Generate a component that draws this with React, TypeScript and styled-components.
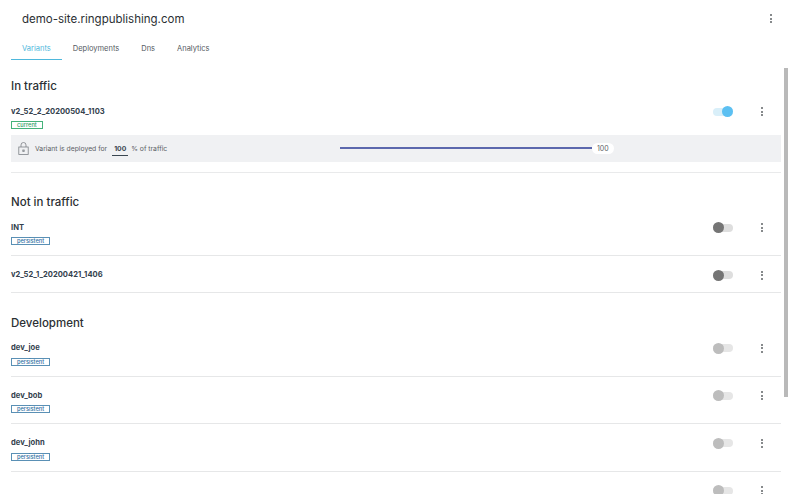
import styled, { createGlobalStyle } from "styled-components";

const GlobalStyle = createGlobalStyle`
  html, body {
    margin: 0;
    background: #fff;
    font-family: Inter, "Liberation Sans", sans-serif;
    overflow: hidden;
  }
`;

const Page = styled.div`
  width: 800px;
  height: 494px;
  display: flex;
  flex-direction: column;
  overflow: hidden;
`;

const Header = styled.header`
  height: 37px;
  flex: none;
  display: flex;
  align-items: center;
  justify-content: space-between;
  padding: 0 28px 0 22px;
`;

const Title = styled.h1`
  margin: 0;
  font-size: 11.5px;
  font-weight: 400;
  color: #2b2f33;
`;

const Tabs = styled.nav`
  height: 22px;
  flex: none;
  display: flex;
  padding-left: 11px;
`;

const Tab = styled.a<{ $active?: boolean }>`
  box-sizing: border-box;
  height: 23px;
  padding: 1px 11px 0;
  font-size: 7.5px;
  line-height: 22px;
  color: ${(p) => (p.$active ? "#4fb8dc" : "#555a5f")};
  border-bottom: 1px solid ${(p) => (p.$active ? "#4fb8dc" : "transparent")};
`;

const ScrollArea = styled.main`
  position: relative;
  flex: 1;
  overflow: hidden;
  padding: 17px 19px 0 11px;
`;

const Thumb = styled.div`
  position: absolute;
  top: 9px;
  right: 12.5px;
  width: 3.5px;
  height: 329px;
  background: #b9b9b9;
`;

const Section = styled.section`
  margin-bottom: 19.5px;
`;

const SectionTitle = styled.h2`
  margin: 0;
  height: 16.5px;
  font-size: 11.5px;
  line-height: 21px;
  font-weight: 500;
  color: #2b2f33;
`;

const Row = styled.div<{ $plain?: boolean; $height: number }>`
  box-sizing: border-box;
  display: flex;
  justify-content: space-between;
  align-items: flex-start;
  padding-top: 13px;
  height: ${(p) => p.$height}px;
  border-bottom: 1px solid ${(p) => (p.$plain ? "transparent" : "#e6e7e8")};
`;

const RowInfo = styled.div`
  display: flex;
  flex-direction: column;
  align-items: flex-start;
  gap: 3.8px;
`;

const VariantName = styled.span`
  font-size: 7.6px;
  line-height: 12px;
  font-weight: 700;
  color: #33414d;
`;

const Badge = styled.span<{ $color: string; $border: string }>`
  box-sizing: border-box;
  height: 8px;
  padding: 0 5px;
  font-size: 5.7px;
  font-weight: 500;
  line-height: 6px;
  color: ${(p) => p.$color};
  border: 1px solid ${(p) => p.$border};
`;

const RowActions = styled.div`
  height: 12px;
  display: flex;
  align-items: center;
  gap: 28px;
  margin-right: 18px;
`;

const Switch = styled.div<{ $on?: boolean; $tone: string; $track: string }>`
  position: relative;
  width: 20px;
  height: 8px;
  border-radius: 4px;
  background: ${(p) => p.$track};

  &::after {
    content: "";
    position: absolute;
    top: -1.5px;
    left: ${(p) => (p.$on ? "9px" : "0")};
    width: 11px;
    height: 11px;
    border-radius: 50%;
    background: ${(p) => p.$tone};
  }
`;

const Kebab = styled.span`
  display: flex;
  flex-direction: column;
  gap: 1.5px;
  width: 2px;

  i {
    display: block;
    width: 2px;
    height: 2px;
    border-radius: 50%;
    background: #5f6366;
  }
`;

const TrafficBar = styled.div`
  height: 27.2px;
  display: flex;
  align-items: center;
  background: #f0f1f3;
  padding-left: 7px;
  font-size: 6.8px;
  color: #5c6166;
`;

const TrafficText = styled.div`
  width: 305px;
  display: flex;
  align-items: center;
  margin-left: 6px;
`;

const TrafficValue = styled.span`
  margin: 0 3px 0 5px;
  padding: 3px 2px 2px;
  font-weight: 700;
  color: #3a4650;
  border-bottom: 1px solid #3a4650;
`;

const Slider = styled.div`
  width: 252px;
  height: 2px;
  background: #5c68ad;
`;

const SliderValue = styled.span`
  padding: 1px 5px;
  font-size: 7px;
  color: #5c6166;
  background: #fff;
  border-radius: 7px;
`;

const TrafficRule = styled.div`
  margin-top: 10px;
  height: 1px;
  background: #e9eaeb;
`;

const Dots = () => (
  <Kebab>
    <i />
    <i />
    <i />
  </Kebab>
);

const Lock = () => (
  <svg width="11" height="13" viewBox="0 0 11 13" fill="none" stroke="#7d8287" strokeWidth="0.8">
    <rect x="0.8" y="5" width="9.4" height="7.4" />
    <path d="M3 5V3a2.5 2.5 0 0 1 5 0v2" />
    <rect x="4.8" y="8" width="1.4" height="1.4" />
  </svg>
);

type Variant = { name?: string; badge?: string; kind: "live" | "idle" | "dev"; height?: number };

const switchTones = {
  live: { $tone: "#5cc0f2", $track: "#d9eff9" },
  idle: { $tone: "#757575", $track: "#dedede" },
  dev: { $tone: "#bdbdbd", $track: "#e6e6e6" },
};

const VariantRow = ({ name, badge, kind, plain, height = 47.5 }: Variant & { plain?: boolean }) => (
  <Row $plain={plain} $height={height}>
    <RowInfo>
      <VariantName>{name}</VariantName>
      {badge === "current" && (
        <Badge $color="#2f9c62" $border="#45b27a">
          current
        </Badge>
      )}
      {badge === "persistent" && (
        <Badge $color="#2f6f9f" $border="#5a90b5">
          persistent
        </Badge>
      )}
    </RowInfo>
    <RowActions>
      <Switch $on={kind === "live"} {...switchTones[kind]} />
      <Dots />
    </RowActions>
  </Row>
);

export default function App() {
  return (
    <Page>
      <GlobalStyle />
      <Header>
        <Title>demo-site.ringpublishing.com</Title>
        <Dots />
      </Header>
      <Tabs>
        <Tab $active>Variants</Tab>
        <Tab>Deployments</Tab>
        <Tab>Dns</Tab>
        <Tab>Analytics</Tab>
      </Tabs>
      <ScrollArea>
        <Thumb />
        <Section>
          <SectionTitle>In traffic</SectionTitle>
          <VariantRow name="v2_52_2_20200504_1103" badge="current" kind="live" plain height={42} />
          <TrafficBar>
            <Lock />
            <TrafficText>
              Variant is deployed for <TrafficValue>100</TrafficValue> % of traffic
            </TrafficText>
            <Slider />
            <SliderValue>100</SliderValue>
          </TrafficBar>
          <TrafficRule />
        </Section>
        <Section>
          <SectionTitle>Not in traffic</SectionTitle>
          <VariantRow name="INT" badge="persistent" kind="idle" />
          <VariantRow name="v2_52_1_20200421_1406" kind="idle" height={37} />
        </Section>
        <Section>
          <SectionTitle>Development</SectionTitle>
          <VariantRow name="dev_joe" badge="persistent" kind="dev" />
          <VariantRow name="dev_bob" badge="persistent" kind="dev" />
          <VariantRow name="dev_john" badge="persistent" kind="dev" />
          <VariantRow kind="dev" />
        </Section>
      </ScrollArea>
    </Page>
  );
}
